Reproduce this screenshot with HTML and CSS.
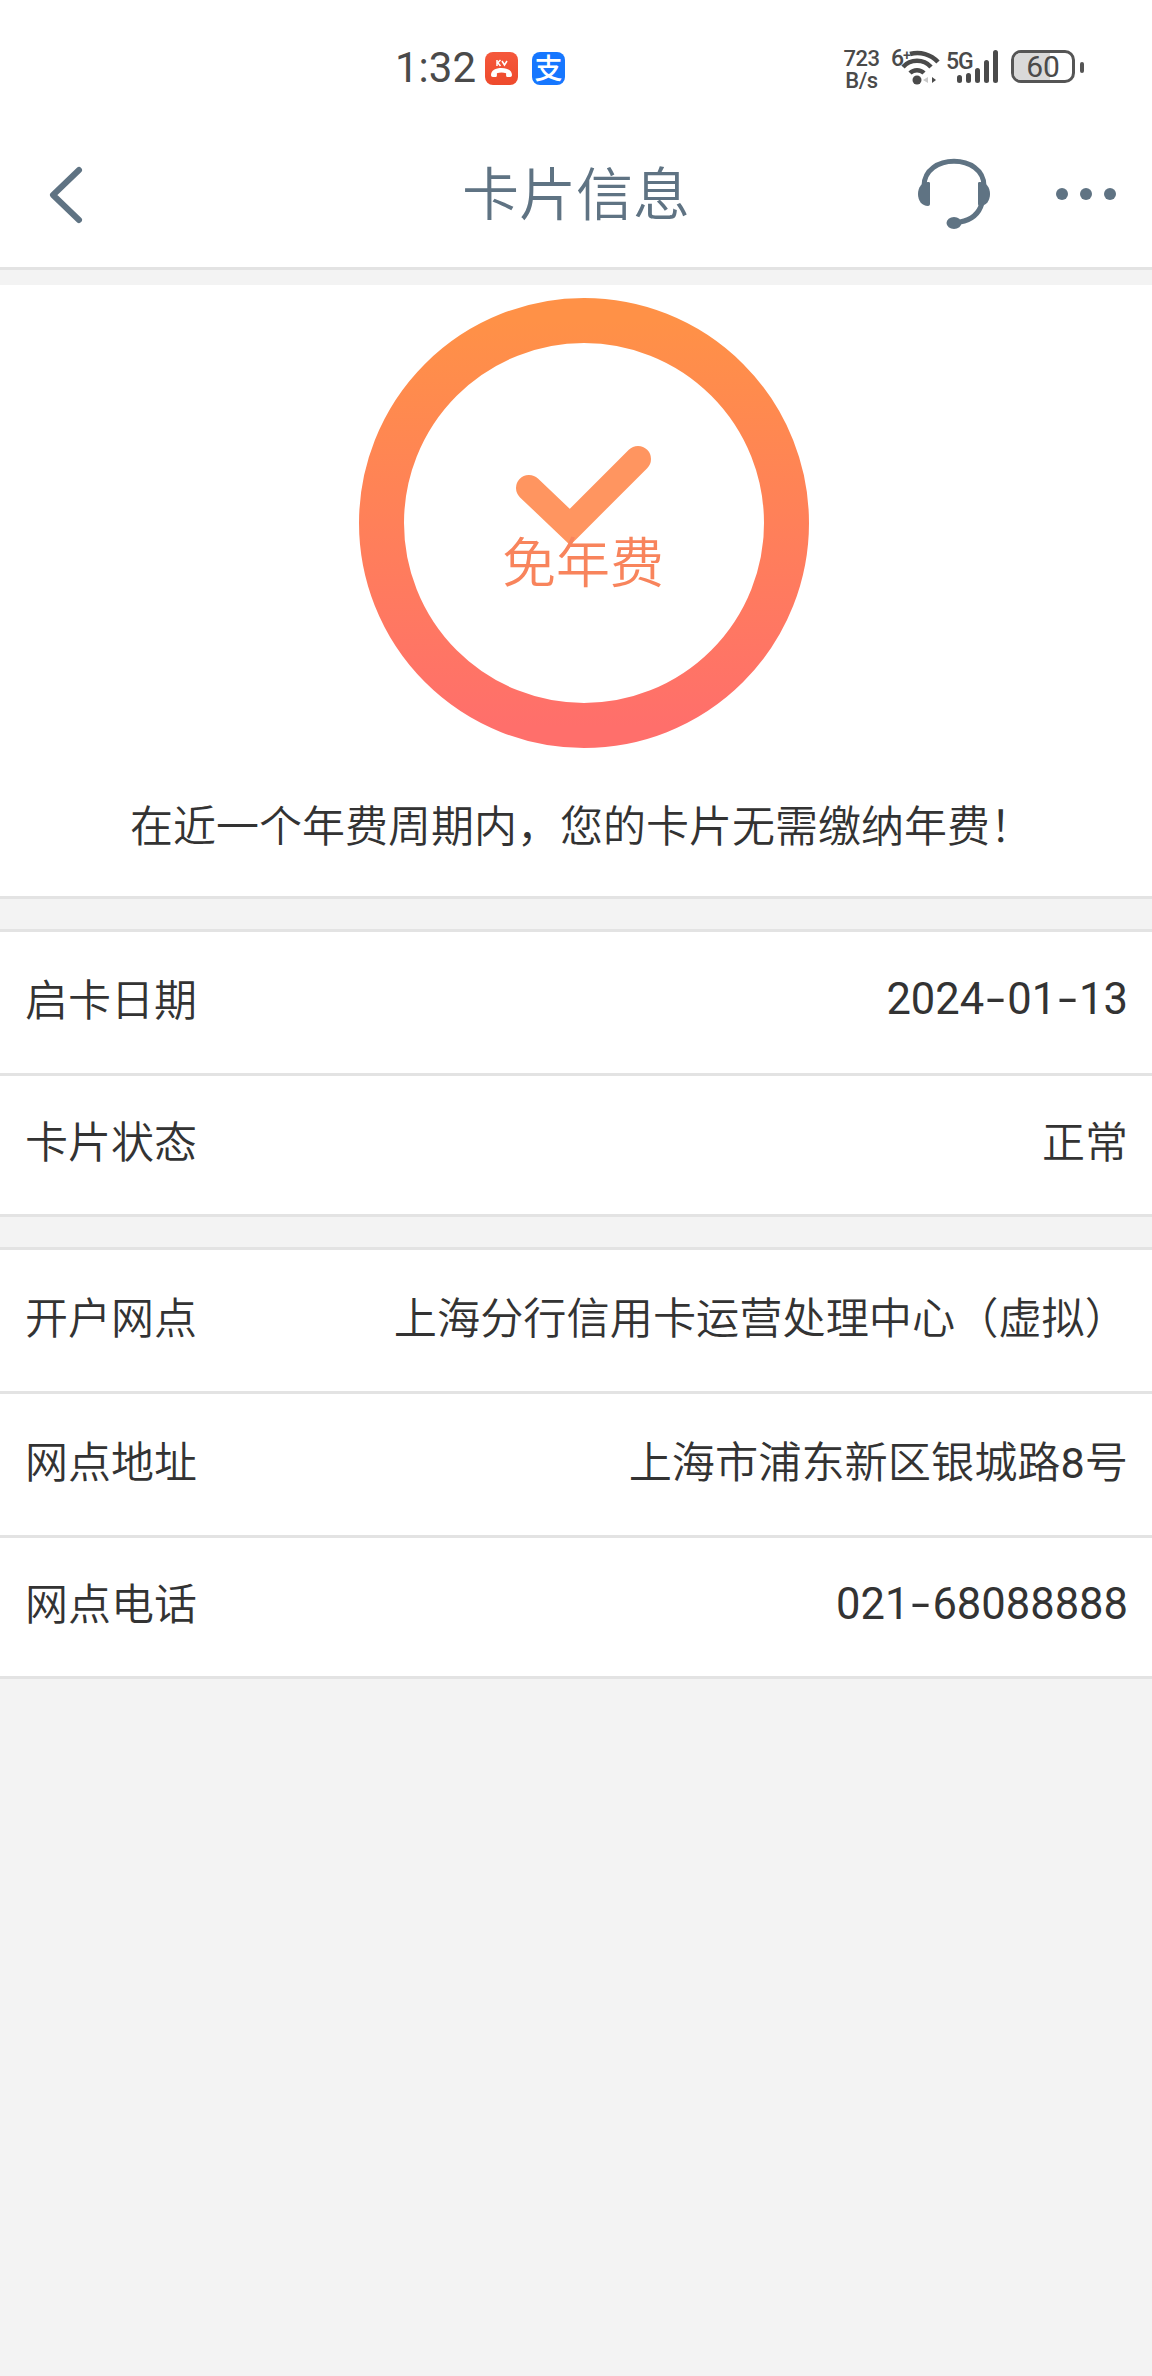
FILE: index.html
```html
<!DOCTYPE html>
<html lang="zh-CN">
<head>
<meta charset="utf-8">
<title>卡片信息</title>
<link rel="stylesheet" href="styles.css">
</head>
<body>
<div class="status">
  <div class="status-center">
    <span class="time">1:32</span>
    <span class="app app-red">
      <svg viewBox="0 0 33 33" width="33" height="33"><path class="call" d="M6 23c0-4.500 4.500-7 10.500-7s10.500 2.500 10.500 7c0 1.200-.8 2-1.800 2h-2.400c-1 0-1.700-.7-1.700-1.600v-2.200c-2.700-.8-6.500-.8-9.200 0v2.200c0 .9-.7 1.600-1.700 1.600H7.800C6.800 25 6 24.200 6 23z"/><path class="miss" d="M12 8v6M12.500 11l3-3M13 11l2.500 3M17 9l2.500 4 2.500-4"/></svg>
    </span>
    <span class="app app-blue">支</span>
  </div>
  <div class="status-right">
    <span class="speed"><span>723</span><span>B/s</span></span>
    <span class="wifi">
      <span class="tag tag-six">6<sup>+</sup></span>
      <svg viewBox="0 0 40 36" width="40" height="36"><path class="wf" d="M8 5A28 28 0 0 1 36 13"/><path class="wf" d="M1 18A19 19 0 0 1 29 18"/><path class="wf" d="M8 24A10 10 0 0 1 22 24"/><circle cx="15" cy="31" r="4.500" class="wd"/><path d="M21 31l5-3v6z" fill="#c8c8c8"/><path d="M30 28v6l4-3z" fill="#4a4a4a"/></svg>
    </span>
    <span class="signal">
      <span class="tag tag-five">5G</span>
      <span class="bars"><i class="b1"></i><i class="b2"></i><i class="b3"></i><i class="b4"></i><i class="b5"></i></span>
    </span>
    <span class="battery"><span class="battery-fill"></span><span class="battery-num">60</span></span>
    <span class="nub"></span>
  </div>
</div>

<header class="nav">
  <svg class="back" viewBox="0 0 40 66" width="40" height="66"><path d="M32 9L6 34L32 59"/></svg>
  <h1 class="title">卡片信息</h1>
  <div class="nav-actions">
    <svg class="headset" viewBox="0 0 76 76" width="76" height="76">
      <path class="hs" d="M8 30C8 -3 68 -3 68 30"/>
      <path class="hs" d="M66 47C63 58 55 64 44 66"/>
      <path class="hf" d="M14 27v21c0 1-1 2-2 2c-6 0-10-5-10-12s4-12 10-12c1 0 2 0 2 1z"/>
      <path class="hf" d="M62 27v21c0 1 1 2 2 2c6 0 10-5 10-12s-4-12-10-12c-1 0-2 0-2 1z"/>
      <ellipse class="hf" cx="38" cy="67" rx="7.500" ry="6"/>
    </svg>
    <span class="dots"><i></i><i></i><i></i></span>
  </div>
</header>

<section class="hero">
  <div class="ring">
    <svg viewBox="0 0 450 450" width="450" height="450">
      <defs><linearGradient id="rg" x1="0" y1="0" x2="0" y2="1"><stop offset="0" stop-color="#ff9147"/><stop offset="1" stop-color="#ff6f6b"/></linearGradient></defs>
      <circle cx="225" cy="225" r="202.500" fill="none" stroke="url(#rg)" stroke-width="45"/>
      <path class="tick" d="M170 190L211 229L279 161"/>
    </svg>
    <span class="ring-label">免年费</span>
  </div>
  <p class="message">在近一个年费周期内，您的卡片无需缴纳年费！</p>
</section>

<section class="group">
  <div class="row row-a"><span>启卡日期</span><span class="num">2024<span class="hy">-</span>01<span class="hy">-</span>13</span></div>
  <div class="row row-b"><span>卡片状态</span><span>正常</span></div>
</section>

<section class="group">
  <div class="row row-a"><span>开户网点</span><span class="wide">上海分行信用卡运营处理中心（虚拟）</span></div>
  <div class="row row-a"><span>网点地址</span><span class="wide">上海市浦东新区银城路<span class="digit">8</span>号</span></div>
  <div class="row row-b"><span>网点电话</span><span class="num">021<span class="hy">-</span>68088888</span></div>
</section>
</body>
</html>
```
FILE: styles.css
```css
* { box-sizing: border-box; }
html, body { margin: 0; padding: 0; }
body {
  width: 1152px;
  min-height: 2376px;
  background: #f3f3f3;
  font-family: "Noto Sans CJK SC", "Noto Sans", sans-serif;
  color: #333;
}
.status {
  height: 130px;
  background: #fff;
  position: relative;
}
.status-center {
  display: flex;
  align-items: center;
  padding: 48px 0 0 395px;
  height: 88px;
}
.time {
  font-family: Roboto, sans-serif;
  font-size: 42px;
  line-height: 40px;
  color: #4a4a4a;
  width: 90px;
}
.app {
  width: 33px;
  height: 33px;
  border-radius: 8px;
  display: block;
}
.app-red { background: linear-gradient(#f5583c, #ee4a2c); margin-right: 14px; }
.call { fill: #fff; }
.miss { fill: none; stroke: #fff; stroke-width: 1.500; }
.app-blue {
  background: #1677ff;
  color: #fff;
  font-size: 28px;
  line-height: 31px;
  text-align: center;
  font-weight: 500;
}
.status-right {
  position: absolute;
  top: 48px;
  left: 844px;
  display: flex;
  align-items: flex-start;
  color: #4a4a4a;
  font-family: Roboto, sans-serif;
}
.speed {
  display: flex;
  flex-direction: column;
  align-items: center;
  width: 35px;
  font-size: 22px;
  font-weight: 500;
  line-height: 22px;
  letter-spacing: -.5px;
  margin-right: 12px;
}
.wifi { display: flex; width: 58px; position: relative; height: 36px; }
.wifi svg { position: absolute; left: 11px; top: 1px; overflow: visible; }
.wf { fill: none; stroke: #4a4a4a; stroke-width: 4.500; }
.wd { fill: #4a4a4a; }
.tag { font-weight: 500; font-size: 23px; line-height: 22px; letter-spacing: -1px; }
.tag sup { font-size: 14px; line-height: 0; vertical-align: 6px; }
.signal { width: 63px; position: relative; height: 36px; display: block; margin-left: -5px; }
.tag-five { position: absolute; left: 2px; top: 3px; }
.bars { position: absolute; left: 13px; top: 1px; display: flex; align-items: flex-end; gap: 4px; height: 34px; }
.bars i { display: block; width: 5px; background: #4a4a4a; border-radius: 3px; }
.b1 { height: 8px; }
.b2 { height: 10px; }
.b3 { height: 15px; }
.b4 { height: 23px; }
.b5 { height: 33px; }
.battery {
  position: relative;
  width: 64px;
  height: 33px;
  margin: 2px 0 0 4px;
  border: 3px solid #555;
  border-radius: 10px;
  overflow: hidden;
  display: block;
}
.battery-fill { position: absolute; left: 0; top: 0; bottom: 0; width: 36px; background: #d9d9d9; }
.battery-num {
  position: absolute;
  left: 0;
  right: 0;
  top: -3px;
  text-align: center;
  font-size: 30px;
  line-height: 34px;
  color: #4a4a4a;
}
.nub { width: 4px; height: 11px; margin: 14px 0 0 5px; background: #555; border-radius: 2px; }

.nav {
  height: 140px;
  background: #fff;
  border-bottom: 3px solid #e3e3e3;
  position: relative;
  display: flex;
  align-items: center;
  justify-content: space-between;
  padding: 0 0 9px 47px;
}
.back path { fill: none; stroke: #5f7383; stroke-width: 6; stroke-linecap: round; stroke-linejoin: round; }
.title {
  position: absolute;
  left: 0;
  right: 0;
  top: 20px;
  margin: 0;
  text-align: center;
  font-size: 57px;
  font-weight: 350;
  line-height: 80px;
  color: #5f7383;
}
.nav-actions { display: flex; align-items: center; }
.hs { fill: none; stroke: #5f7383; stroke-width: 5; }
.hf { fill: #5f7383; }
.headset { margin-right: 64px; }
.dots { display: flex; gap: 12px; margin-right: 36px; }
.dots i { display: block; width: 12px; height: 12px; border-radius: 50%; background: #5f7383; }

.hero {
  margin-top: 15px;
  height: 614px;
  background: #fff;
  border-bottom: 3px solid #e3e3e3;
  padding-top: 13px;
}
.ring { position: relative; width: 450px; height: 450px; margin-left: 359px; }
.ring svg { display: block; }
.tick { fill: none; stroke: #ff9560; stroke-width: 26; stroke-linecap: round; }
.ring-label {
  position: absolute;
  left: -2px;
  right: 0;
  top: 227px;
  text-align: center;
  font-size: 54px;
  font-weight: 350;
  line-height: 70px;
  color: #f8845c;
}
.message {
  margin: 45px 0 0;
  padding-left: 11px;
  text-align: center;
  font-size: 43px;
  line-height: 60px;
  font-weight: 350;
  color: #333;
}
.group {
  margin-top: 30px;
  background: #fff;
  border-top: 3px solid #e3e3e3;
}
.row {
  display: flex;
  justify-content: space-between;
  align-items: center;
  padding: 0 24px 12px 25px;
  font-family: Roboto, "Noto Sans CJK SC", sans-serif;
  font-size: 43px;
  font-weight: 350;
  color: #333;
  background: #fff;
  border-bottom: 3px solid #e3e3e3;
}
.row-a { height: 144px; }
.row-b { height: 141px; }
.wide { font-size: 43.200px; }
.digit { font-weight: 400; }
.num { font-size: 43.500px; font-weight: 400; padding-top: 6px; }
.hy {
  display: inline-block;
  width: 23px;
  text-align: center;
  transform: scaleX(1.550);
}
```
